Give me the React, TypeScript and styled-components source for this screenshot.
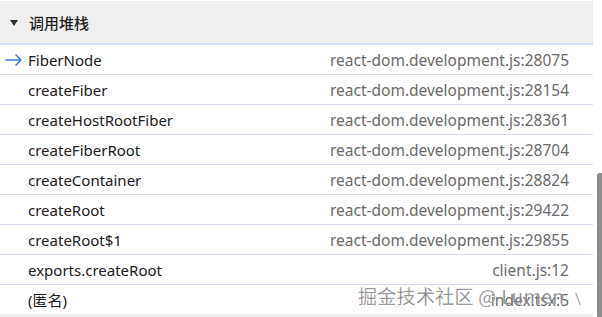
import * as React from 'react'
import styled, { createGlobalStyle } from 'styled-components'

const GlobalStyle = createGlobalStyle`
  html, body {
    margin: 0;
    padding: 0;
    background: #fff;
  }
  body {
    font-family: 'Noto Sans', 'Noto Sans CJK SC', sans-serif;
  }
`

type Frame = {
  name: string
  location: string
  current?: boolean
}

const frames: Frame[] = [
  { name: 'FiberNode', location: 'react-dom.development.js:28075', current: true },
  { name: 'createFiber', location: 'react-dom.development.js:28154' },
  { name: 'createHostRootFiber', location: 'react-dom.development.js:28361' },
  { name: 'createFiberRoot', location: 'react-dom.development.js:28704' },
  { name: 'createContainer', location: 'react-dom.development.js:28824' },
  { name: 'createRoot', location: 'react-dom.development.js:29422' },
  { name: 'createRoot$1', location: 'react-dom.development.js:29855' },
  { name: 'exports.createRoot', location: 'client.js:12' },
  { name: '(匿名)', location: 'index.tsx:5' },
]

const Page = styled.div`
  position: relative;
  width: 602px;
  height: 317px;
  overflow: hidden;
  display: flex;
  background: #fff;
`

const Panel = styled.div`
  width: 593px;
  display: flex;
  flex-direction: column;
  padding-top: 1px;
`

const Header = styled.div`
  height: 42px;
  display: flex;
  align-items: center;
  gap: 11px;
  padding-left: 10px;
  background: #efefef;
  border-bottom: 2px solid #d3e2f8;
  font-size: 15px;
  font-weight: 500;
  color: #1f1f1f;
`

const Caret = styled.span`
  width: 0;
  height: 0;
  border-left: 4.5px solid transparent;
  border-right: 4.5px solid transparent;
  border-top: 6px solid #333;
  margin-top: 1px;
`

const Row = styled.div`
  height: 29px;
  display: flex;
  align-items: center;
  border-bottom: 1px solid #dcdcf2;
  font-size: 15px;
`

const Marker = styled.span`
  width: 28px;
  display: flex;
  justify-content: flex-start;
  padding-left: 5px;
  box-sizing: border-box;
`

const Name = styled.span`
  flex: 1;
  color: #202020;
  white-space: nowrap;
`

const Location = styled.span`
  color: #6b6b6b;
  font-size: 15.5px;
  padding-right: 24px;
  white-space: nowrap;
`

const Footer = styled.div`
  flex: 1;
  background: #efefef;
  margin-top: -1px;
`

const Gutter = styled.div`
  flex: 1;
  display: flex;
  justify-content: flex-end;
  padding-top: 173px;
`

const Thumb = styled.div`
  width: 5px;
  background: #8c8c8c;
  border-radius: 3px 0 0 0;
`

const Watermark = styled.div`
  position: absolute;
  left: 358px;
  top: 282px;
  font-size: 19px;
  color: rgba(110, 110, 110, 0.85);
  -webkit-text-stroke: 0.4px rgba(255, 255, 255, 0.6);
  white-space: nowrap;
  letter-spacing: 0.3px;
  font-family: 'Noto Sans CJK SC', 'Noto Sans', sans-serif;
`

const ArrowIcon = () => (
  <svg width="18" height="12" viewBox="0 0 18 12">
    <path
      d="M1 6 H16 M11 1 L16 6 L11 11"
      fill="none"
      stroke="#3b7ddd"
      strokeWidth="1.5"
      strokeLinecap="round"
      strokeLinejoin="round"
    />
  </svg>
)

export default function App() {
  return (
    <Page>
      <GlobalStyle />
      <Panel>
        <Header>
          <Caret />
          <span>调用堆栈</span>
        </Header>
        {frames.map((f) => (
          <Row key={f.name}>
            <Marker>{f.current && <ArrowIcon />}</Marker>
            <Name>{f.name}</Name>
            <Location>{f.location}</Location>
          </Row>
        ))}
        <Footer />
      </Panel>
      <Gutter>
        <Thumb />
      </Gutter>
      <Watermark>掘金技术社区 @ Lumen ﹨</Watermark>
    </Page>
  )
}
